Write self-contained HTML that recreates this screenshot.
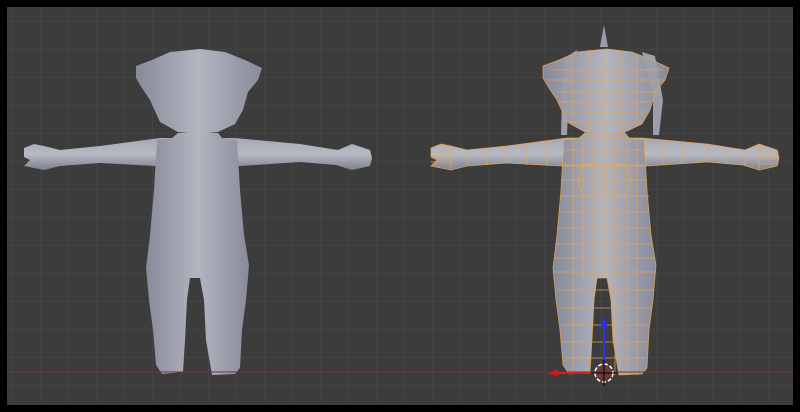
<!DOCTYPE html>
<html><head><style>
html,body{margin:0;padding:0;background:#000;}
body{width:800px;height:412px;overflow:hidden;position:relative;}
#vp{position:absolute;left:7px;top:7px;width:786px;height:398px;background-color:#3c3c3c;
background-image:linear-gradient(#434343 1px,transparent 1px),linear-gradient(90deg,#434343 1px,transparent 1px);
background-size:28px 28px;background-position:5px 14px;}
svg{position:absolute;left:0;top:0;}
</style></head><body>
<div id="vp"></div>
<svg width="800" height="412" viewBox="0 0 800 412">
<defs>
<linearGradient id="g" x1="0" x2="1" y1="0" y2="0">
<stop offset="0" stop-color="#878a99"/><stop offset="0.5" stop-color="#b3b5c0"/><stop offset="1" stop-color="#888b9a"/>
</linearGradient>
<linearGradient id="ga" x1="0" x2="0" y1="0" y2="1">
<stop offset="0" stop-color="#a5a7b2"/><stop offset="0.5" stop-color="#b8bac3"/><stop offset="1" stop-color="#7d808e"/>
</linearGradient>
<g id="fig">
<!-- arms -->
<path d="M24,148 L34,144 L44,146 L60,150 L100,146 L160,138 L235,138 L300,144 L338,150 L352,144 L370,150 L372,158 L370,166 L352,170 L336,165 L300,162 L240,166 L155,166 L100,163 L60,166 L44,170 L24,166 L30,160 L24,157 Z" fill="url(#ga)"/>
<!-- torso + legs -->
<path d="M178,133 L218,133 L222,138 L237,140 L240,190 L244,235 L249,265 L246,300 L242,330 L240,368 L235,374 L212,375 L206,340 L204,300 L200,278 L190,278 L187,300 L185,340 L183,372 L162,374 L156,365 L153,330 L149,300 L146,268 L150,235 L154,190 L157,140 L172,138 Z" fill="url(#g)"/>
<!-- head -->
<path d="M136,66 L152,60 L170,52 L200,49 L225,52 L245,60 L262,68 L258,80 L248,92 L243,110 L235,124 L218,132 L198,134 L178,132 L160,122 L150,100 L142,88 L136,78 Z" fill="url(#g)"/>
</g>
</defs>
<use href="#fig"/>
<g transform="translate(407,0)">
<path d="M193,47 L197,25 L201,47 Z" fill="#9a9ca8"/>
<use href="#fig"/>
<path d="M158,58 L170,50 L162,90 L160,135 L154,135 L155,95 Z M235,52 L248,56 L256,100 L252,135 L246,135 L246,95 Z" fill="#9c9eab"/>
<g stroke="#eaa550" stroke-width="0.8" fill="none" opacity="0.9">
<path d="M136,66 L152,60 L170,52 L200,49 L225,52 L245,60 L262,68 L258,80 L248,92 L243,110 L235,124 L218,132 L198,134 L178,132 L160,122 L150,100 L142,88 L136,78 Z"/>
<path d="M24,148 L34,144 L44,146 L60,150 L100,146 L160,138 L235,138 L300,144 L338,150 L352,144 L370,150 L372,158 L370,166 L352,170 L336,165 L300,162 L240,166 L155,166 L100,163 L60,166 L44,170 L24,166 L30,160 L24,157 Z"/>
<path d="M178,133 L218,133 L222,138 L237,140 L240,190 L244,235 L249,265 L246,300 L242,330 L240,368 L235,374 L212,375 L206,340 L204,300 L200,278 L190,278 L187,300 L185,340 L183,372 L162,374 L156,365 L153,330 L149,300 L146,268 L150,235 L154,190 L157,140 L172,138 Z"/>
<path d="M145,70H255M140,80H258M150,92H248M152,102H245M156,112H240M163,122H232M157,150H238M155,165H240M154,180H240M153,196H242M152,212H242M150,228H243M148,244H246M147,258H248M148,272H248M150,290H247M152,308H244M154,325H242M156,342H240M158,358H239"/>
<path d="M165,55V125M182,50V132M198,49V134M214,50V132M230,55V126M166,140V372M176,140V278M188,138V278M198,135V278M208,138V375M220,140V375M230,140V374"/>
<path d="M44,146V170M60,150V166M80,148V165M100,146V163M120,144V165M140,141V166M256,140V164M275,142V163M300,144V162M320,147V164M338,150V166M352,144V170"/>
<path d="M24,152H44M24,157H44M24,162H44M352,152H372M352,158H372M352,164H372"/>
<ellipse cx="184" cy="180" rx="13" ry="16"/><ellipse cx="211" cy="180" rx="13" ry="16"/>
</g>
</g>
<line x1="7" y1="372" x2="793" y2="372" stroke="#7a3434" stroke-width="1"/>
<line x1="604" y1="322" x2="604" y2="370" stroke="#3030e0" stroke-width="2"/>
<path d="M600,328 L604,316 L608,328 Z" fill="#3030e0"/>
<line x1="555" y1="373" x2="595" y2="373" stroke="#d02020" stroke-width="2"/>
<path d="M548,373 L558,369 L558,377 Z" fill="#e01010"/>
<circle cx="604" cy="373" r="9" fill="#6a3a3a" stroke="#fff" stroke-width="1.5" stroke-dasharray="4 2"/>
<path d="M604,360V386M591,373H617" stroke="#000" stroke-width="1"/>
</svg>
</body></html>
